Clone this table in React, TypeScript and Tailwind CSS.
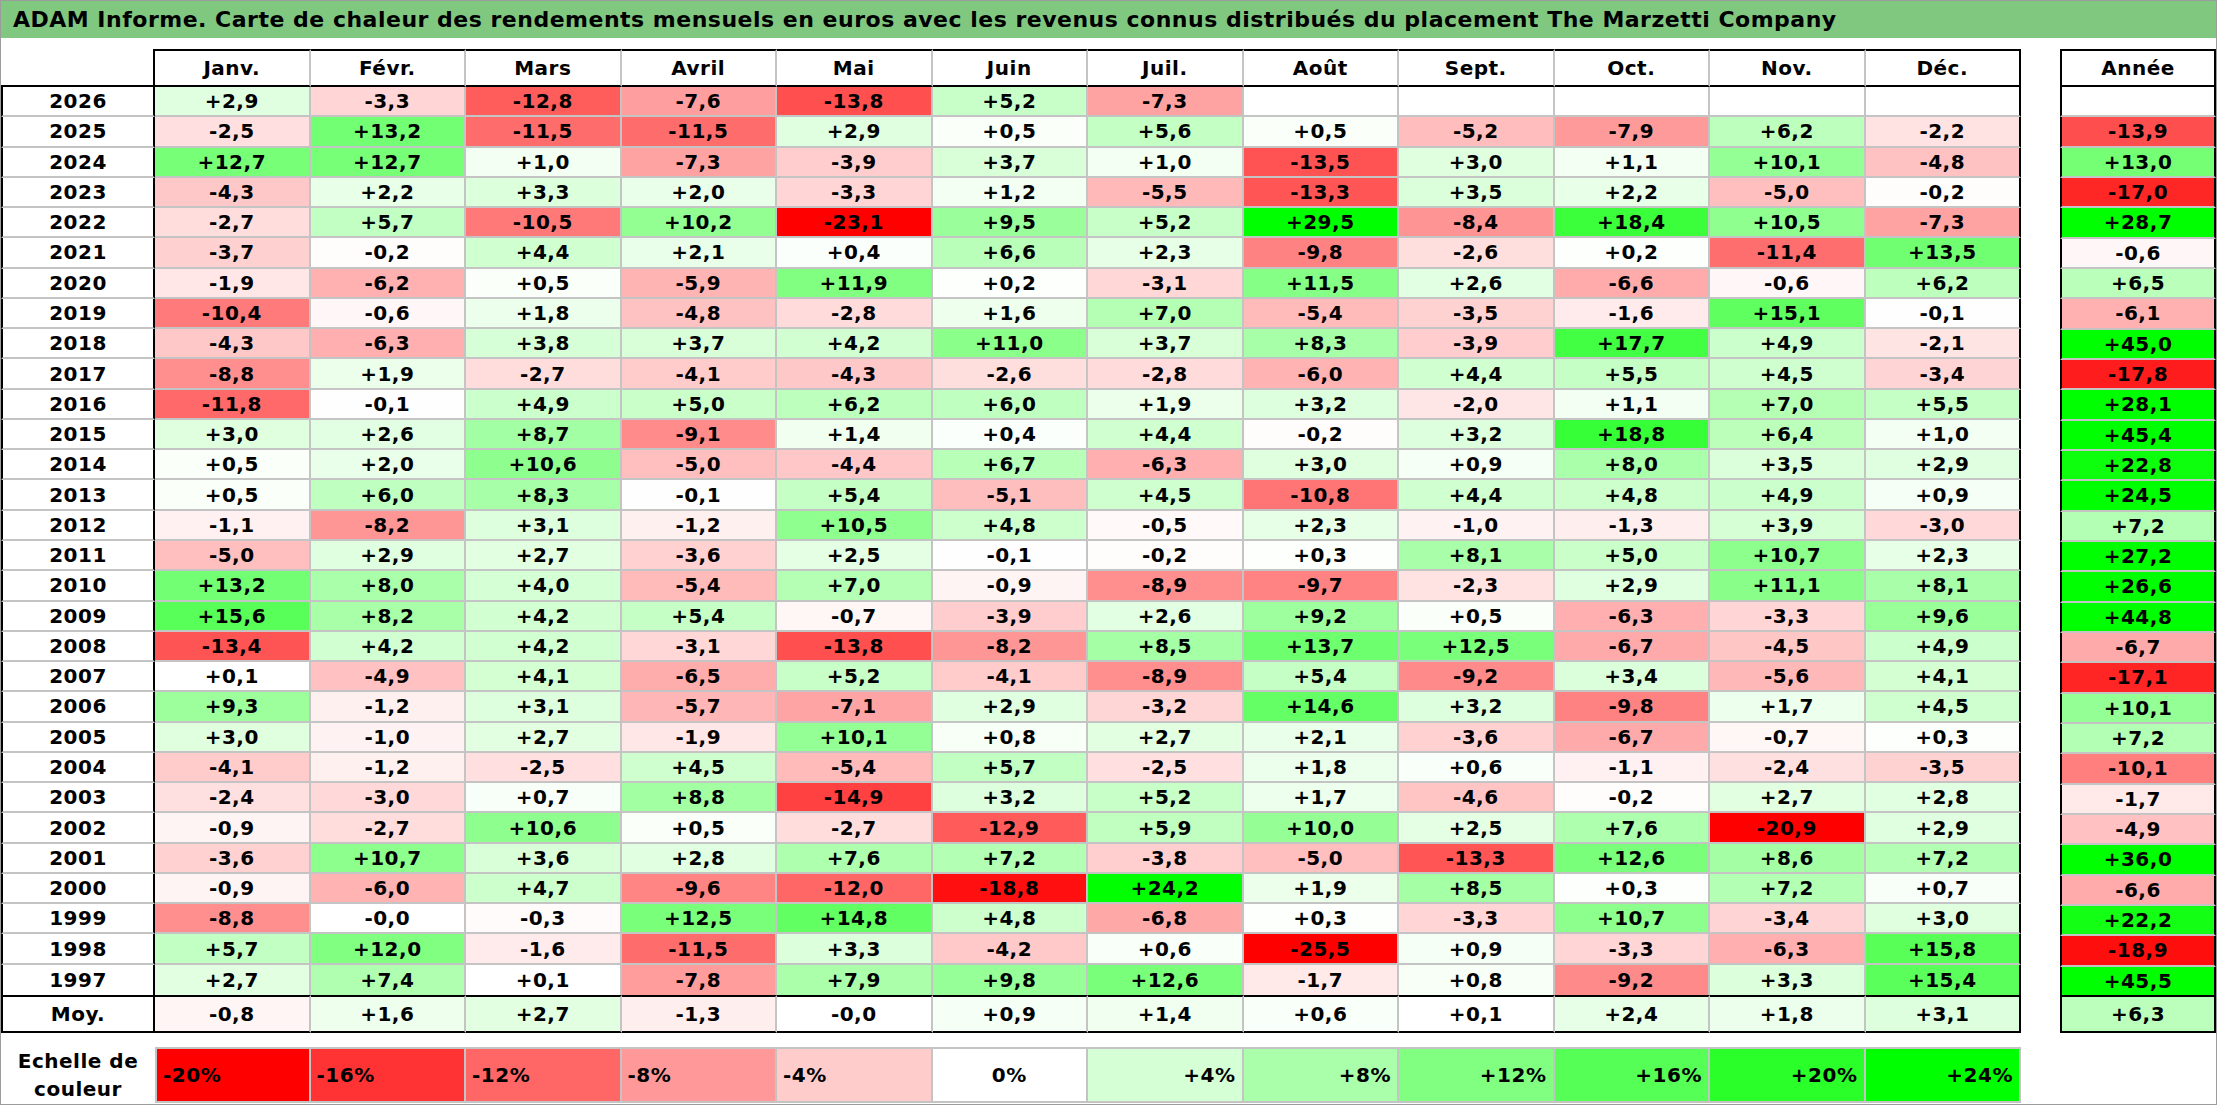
import React from "react";

const MONTHS = ["Janv.", "Févr.", "Mars", "Avril", "Mai", "Juin", "Juil.", "Août", "Sept.", "Oct.", "Nov.", "Déc."];

// année, 12 mois, total annuel ("" = pas encore connu)
const ROWS: [string, string[], string][] = [
  ["2026", ["+2,9", "-3,3", "-12,8", "-7,6", "-13,8", "+5,2", "-7,3", "", "", "", "", ""], ""],
  ["2025", ["-2,5", "+13,2", "-11,5", "-11,5", "+2,9", "+0,5", "+5,6", "+0,5", "-5,2", "-7,9", "+6,2", "-2,2"], "-13,9"],
  ["2024", ["+12,7", "+12,7", "+1,0", "-7,3", "-3,9", "+3,7", "+1,0", "-13,5", "+3,0", "+1,1", "+10,1", "-4,8"], "+13,0"],
  ["2023", ["-4,3", "+2,2", "+3,3", "+2,0", "-3,3", "+1,2", "-5,5", "-13,3", "+3,5", "+2,2", "-5,0", "-0,2"], "-17,0"],
  ["2022", ["-2,7", "+5,7", "-10,5", "+10,2", "-23,1", "+9,5", "+5,2", "+29,5", "-8,4", "+18,4", "+10,5", "-7,3"], "+28,7"],
  ["2021", ["-3,7", "-0,2", "+4,4", "+2,1", "+0,4", "+6,6", "+2,3", "-9,8", "-2,6", "+0,2", "-11,4", "+13,5"], "-0,6"],
  ["2020", ["-1,9", "-6,2", "+0,5", "-5,9", "+11,9", "+0,2", "-3,1", "+11,5", "+2,6", "-6,6", "-0,6", "+6,2"], "+6,5"],
  ["2019", ["-10,4", "-0,6", "+1,8", "-4,8", "-2,8", "+1,6", "+7,0", "-5,4", "-3,5", "-1,6", "+15,1", "-0,1"], "-6,1"],
  ["2018", ["-4,3", "-6,3", "+3,8", "+3,7", "+4,2", "+11,0", "+3,7", "+8,3", "-3,9", "+17,7", "+4,9", "-2,1"], "+45,0"],
  ["2017", ["-8,8", "+1,9", "-2,7", "-4,1", "-4,3", "-2,6", "-2,8", "-6,0", "+4,4", "+5,5", "+4,5", "-3,4"], "-17,8"],
  ["2016", ["-11,8", "-0,1", "+4,9", "+5,0", "+6,2", "+6,0", "+1,9", "+3,2", "-2,0", "+1,1", "+7,0", "+5,5"], "+28,1"],
  ["2015", ["+3,0", "+2,6", "+8,7", "-9,1", "+1,4", "+0,4", "+4,4", "-0,2", "+3,2", "+18,8", "+6,4", "+1,0"], "+45,4"],
  ["2014", ["+0,5", "+2,0", "+10,6", "-5,0", "-4,4", "+6,7", "-6,3", "+3,0", "+0,9", "+8,0", "+3,5", "+2,9"], "+22,8"],
  ["2013", ["+0,5", "+6,0", "+8,3", "-0,1", "+5,4", "-5,1", "+4,5", "-10,8", "+4,4", "+4,8", "+4,9", "+0,9"], "+24,5"],
  ["2012", ["-1,1", "-8,2", "+3,1", "-1,2", "+10,5", "+4,8", "-0,5", "+2,3", "-1,0", "-1,3", "+3,9", "-3,0"], "+7,2"],
  ["2011", ["-5,0", "+2,9", "+2,7", "-3,6", "+2,5", "-0,1", "-0,2", "+0,3", "+8,1", "+5,0", "+10,7", "+2,3"], "+27,2"],
  ["2010", ["+13,2", "+8,0", "+4,0", "-5,4", "+7,0", "-0,9", "-8,9", "-9,7", "-2,3", "+2,9", "+11,1", "+8,1"], "+26,6"],
  ["2009", ["+15,6", "+8,2", "+4,2", "+5,4", "-0,7", "-3,9", "+2,6", "+9,2", "+0,5", "-6,3", "-3,3", "+9,6"], "+44,8"],
  ["2008", ["-13,4", "+4,2", "+4,2", "-3,1", "-13,8", "-8,2", "+8,5", "+13,7", "+12,5", "-6,7", "-4,5", "+4,9"], "-6,7"],
  ["2007", ["+0,1", "-4,9", "+4,1", "-6,5", "+5,2", "-4,1", "-8,9", "+5,4", "-9,2", "+3,4", "-5,6", "+4,1"], "-17,1"],
  ["2006", ["+9,3", "-1,2", "+3,1", "-5,7", "-7,1", "+2,9", "-3,2", "+14,6", "+3,2", "-9,8", "+1,7", "+4,5"], "+10,1"],
  ["2005", ["+3,0", "-1,0", "+2,7", "-1,9", "+10,1", "+0,8", "+2,7", "+2,1", "-3,6", "-6,7", "-0,7", "+0,3"], "+7,2"],
  ["2004", ["-4,1", "-1,2", "-2,5", "+4,5", "-5,4", "+5,7", "-2,5", "+1,8", "+0,6", "-1,1", "-2,4", "-3,5"], "-10,1"],
  ["2003", ["-2,4", "-3,0", "+0,7", "+8,8", "-14,9", "+3,2", "+5,2", "+1,7", "-4,6", "-0,2", "+2,7", "+2,8"], "-1,7"],
  ["2002", ["-0,9", "-2,7", "+10,6", "+0,5", "-2,7", "-12,9", "+5,9", "+10,0", "+2,5", "+7,6", "-20,9", "+2,9"], "-4,9"],
  ["2001", ["-3,6", "+10,7", "+3,6", "+2,8", "+7,6", "+7,2", "-3,8", "-5,0", "-13,3", "+12,6", "+8,6", "+7,2"], "+36,0"],
  ["2000", ["-0,9", "-6,0", "+4,7", "-9,6", "-12,0", "-18,8", "+24,2", "+1,9", "+8,5", "+0,3", "+7,2", "+0,7"], "-6,6"],
  ["1999", ["-8,8", "-0,0", "-0,3", "+12,5", "+14,8", "+4,8", "-6,8", "+0,3", "-3,3", "+10,7", "-3,4", "+3,0"], "+22,2"],
  ["1998", ["+5,7", "+12,0", "-1,6", "-11,5", "+3,3", "-4,2", "+0,6", "-25,5", "+0,9", "-3,3", "-6,3", "+15,8"], "-18,9"],
  ["1997", ["+2,7", "+7,4", "+0,1", "-7,8", "+7,9", "+9,8", "+12,6", "-1,7", "+0,8", "-9,2", "+3,3", "+15,4"], "+45,5"],
];

const AVG = ["-0,8", "+1,6", "+2,7", "-1,3", "-0,0", "+0,9", "+1,4", "+0,6", "+0,1", "+2,4", "+1,8", "+3,1"];
const AVG_YEAR = "+6,3";

const SCALE = [-20, -16, -12, -8, -4, 0, 4, 8, 12, 16, 20, 24];

function heat(s: string | number) {
  if (s === "") return "#ffffff";
  const v = typeof s === "number" ? s : parseFloat(s.replace(",", "."));
  if (v < 0) {
    const c = Math.round(255 * (1 - Math.min(1, -v / 20)));
    return `rgb(255,${c},${c})`;
  }
  const c = Math.round(255 * (1 - Math.min(1, v / 24)));
  return `rgb(${c},255,${c})`;
}

const GRID = "grid grid-cols-[154px_repeat(12,minmax(0,1fr))]";

export default function App() {
  return (
    <div className="w-[2217px] h-[1105px] overflow-hidden border border-[#9c9c9c] bg-white text-black font-[family-name:'DejaVu_Sans',sans-serif] font-bold text-[20px] leading-none tracking-[0.5px]">
      <div className="h-[37px] bg-[#80c880] pl-[12px] pt-[1px] flex items-center text-[22px]">
        ADAM Informe. Carte de chaleur des rendements mensuels en euros avec les revenus connus distribués du placement The Marzetti Company
      </div>

      <div className="mt-[11px] flex">
        {/* tableau principal */}
        <div className="w-[2020px] flex flex-col">
          <div className={`${GRID} h-[38px]`}>
            <div className="border-r-2 border-b-2 border-r-black border-b-black" />
            {MONTHS.map((m, i) => (
              <div
                key={m}
                className={`flex items-center justify-center border-t-2 border-b-2 border-r-2 border-t-black border-b-black ${
                  i === 11 ? "border-r-black" : "border-r-[#c4c4c4]"
                }`}
              >
                {m}
              </div>
            ))}
          </div>

          <div className="h-[908px] flex flex-col">
            {ROWS.map(([year, vals], r) => (
              <div key={year} className={`${GRID} flex-1`}>
                <div
                  className={`flex items-center justify-center border-l-2 border-r-2 border-l-black border-r-black ${
                    r < ROWS.length - 1 ? "border-b-2 border-b-[#c4c4c4]" : ""
                  }`}
                >
                  {year}
                </div>
                {vals.map((v, i) => (
                  <div
                    key={i}
                    className={`flex items-center justify-center border-r-2 ${i === 11 ? "border-r-black" : "border-r-[#c4c4c4]"} ${
                      r < ROWS.length - 1 ? "border-b-2 border-b-[#c4c4c4]" : ""
                    }`}
                    style={{ backgroundColor: heat(v) }}
                  >
                    {v}
                  </div>
                ))}
              </div>
            ))}
          </div>

          <div className={`${GRID} h-[38px]`}>
            <div className="flex items-center justify-center border-2 border-black">Moy.</div>
            {AVG.map((v, i) => (
              <div
                key={i}
                className={`flex items-center justify-center border-t-2 border-b-2 border-r-2 border-t-black border-b-black ${
                  i === 11 ? "border-r-black" : "border-r-[#c4c4c4]"
                }`}
                style={{ backgroundColor: heat(v) }}
              >
                {v}
              </div>
            ))}
          </div>

          {/* échelle de couleur */}
          <div className={`${GRID} h-[56px] mt-[14px]`}>
            <div className="flex flex-col items-center justify-center leading-[28px]">
              <span>Echelle de</span>
              <span>couleur</span>
            </div>
            {SCALE.map((s, i) => (
              <div
                key={s}
                className={`flex items-center px-[6px] border-t-2 border-b-2 border-r-2 border-[#c4c4c4] ${i === 0 ? "border-l-2" : ""} ${
                  s < 0 ? "justify-start" : s === 0 ? "justify-center" : "justify-end"
                }`}
                style={{ backgroundColor: heat(s) }}
              >
                {s > 0 ? `+${s}%` : `${s}%`}
              </div>
            ))}
          </div>
        </div>

        {/* colonne Année */}
        <div className="ml-[39px] w-[156px] flex flex-col">
          <div className="h-[38px] flex items-center justify-center border-2 border-black">Année</div>
          <div className="h-[908px] flex flex-col">
            {ROWS.map(([year, , total], r) => (
              <div
                key={year}
                className={`flex-1 flex items-center justify-center border-l-2 border-r-2 border-black ${
                  r < ROWS.length - 1 ? "border-b-2 border-b-[#c4c4c4]" : ""
                }`}
                style={{ backgroundColor: heat(total) }}
              >
                {total}
              </div>
            ))}
          </div>
          <div
            className="h-[38px] flex items-center justify-center border-2 border-black"
            style={{ backgroundColor: heat(AVG_YEAR) }}
          >
            {AVG_YEAR}
          </div>
        </div>
      </div>
    </div>
  );
}
